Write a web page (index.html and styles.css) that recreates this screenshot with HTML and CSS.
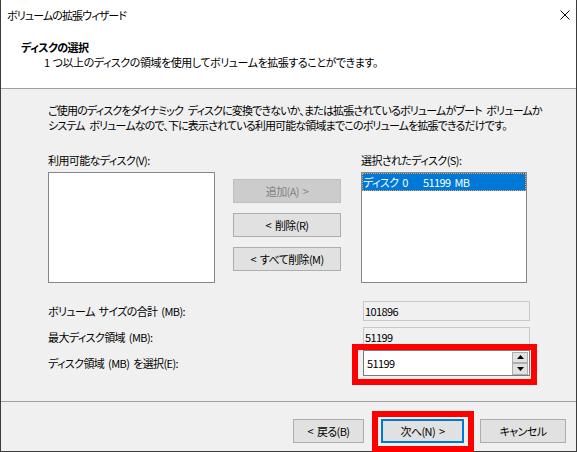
FILE: index.html
```html
<!DOCTYPE html>
<html lang="ja">
<head>
<meta charset="utf-8">
<title>ボリュームの拡張ウィザード</title>
<link rel="stylesheet" href="styles.css">
</head>
<body>
<div class="window">
  <div class="top">
    <div class="titlebar">
      <span class="title">ボリュームの拡張ウィザード</span>
      <svg class="close" width="10" height="10" viewBox="0 0 10 10"><path d="M0.5 0.5L9.5 9.5M9.5 0.5L0.5 9.5" stroke="#000" stroke-width="1" fill="none"/></svg>
    </div>
    <div class="header">
      <div class="h-title">ディスクの選択</div>
      <div class="h-sub">1 つ以上のディスクの領域を使用してボリュームを拡張することができます。</div>
    </div>
  </div>
  <div class="body">
    <p class="desc">ご使用のディスクをダイナミック ディスクに変換できないか、または拡張されているボリュームがブート ボリュームか<br>システム ボリュームなので、下に表示されている利用可能な領域までこのボリュームを拡張できるだけです。</p>
    <div class="lists">
      <div class="label">利用可能なディスク(V):</div>
      <div></div>
      <div class="label">選択されたディスク(S):</div>
      <div class="listbox"></div>
      <div class="midbtns">
        <div class="btn disabled">追加(A) &gt;</div>
        <div class="btn">&lt; 削除(R)</div>
        <div class="btn">&lt; すべて削除(M)</div>
      </div>
      <div class="listbox">
        <div class="item"><span class="c1">ディスク 0</span><span>51199 MB</span></div>
      </div>
    </div>
    <div class="fields">
      <div class="flabel">ボリューム サイズの合計 (MB):</div>
      <div class="ro">101896</div>
      <div class="flabel">最大ディスク領域 (MB):</div>
      <div class="ro">51199</div>
      <div class="flabel">ディスク領域 (MB) を選択(E):</div>
      <div class="spin">
        <span class="spin-val">51199</span>
        <div class="spin-btns">
          <div class="sb"><svg width="7" height="4" viewBox="0 0 7 4"><path d="M3.5 0L7 4H0Z" fill="#000"/></svg></div>
          <div class="sb"><svg width="7" height="4" viewBox="0 0 7 4"><path d="M0 0H7L3.5 4Z" fill="#000"/></svg></div>
        </div>
      </div>
    </div>
  </div>
  <div class="footer">
    <div class="btn fbtn back">&lt; 戻る(B)</div>
    <div class="btn fbtn next">次へ(N) &gt;</div>
    <div class="btn fbtn cancel">キャンセル</div>
  </div>
  <div class="mark mark1"></div>
  <div class="mark mark2"></div>
</div>
</body>
</html>
```
FILE: styles.css
```css
* { box-sizing: border-box; }
html, body { margin: 0; padding: 0; }
body {
  font-family: "Noto Sans CJK JP", "Noto Sans", sans-serif;
  font-size: 11px;
  font-feature-settings: "palt";
  letter-spacing: -0.6px;
  word-spacing: 2px;
  color: #000;
  background: #fff;
}
.window {
  position: relative;
  width: 577px;
  height: 452px;
  border-left: 1px solid #3c3c3c;
  border-right: 1px solid #3c3c3c;
  border-bottom: 1px solid #3c3c3c;
  background: #f0f0f0;
  display: flex;
  flex-direction: column;
}
.top {
  background: #fff;
  height: 89px;
  border-bottom: 1px solid #a0a0a0;
}
.titlebar {
  height: 30px;
  display: flex;
  align-items: center;
  justify-content: space-between;
  padding: 0 6px 0 6px;
  line-height: 15px;
}
.title { letter-spacing: -0.9px; }
.close { margin-top: -1px; }
.header { padding: 10px 0 0 0; line-height: 15px; }
.h-title { font-weight: bold; padding-left: 20px; }
.h-sub { padding-left: 43px; letter-spacing: -0.45px; word-spacing: 1px; }
.body {
  height: 312px;
  padding: 14px 0 0 47px;
}
.desc { margin: 0; line-height: 15px; white-space: nowrap; letter-spacing: -0.85px; word-spacing: 3px; }
.lists {
  margin-top: 19px;
  display: grid;
  grid-template-columns: 167px 108px 168px;
  column-gap: 18px;
  width: 482px;
}
.lists > :nth-child(3) { margin-left: 2px; }
.label { line-height: 16px; height: 20px; }
.listbox {
  height: 111px;
  background: #fff;
  border: 1px solid #828790;
}
.lists .listbox:last-child { margin-left: 2px; }
.midbtns {
  padding-top: 7px;
  display: flex;
  flex-direction: column;
  gap: 10px;
}
.btn {
  height: 24px;
  background: #e1e1e1;
  border: 1px solid #adadad;
  display: flex;
  align-items: center;
  justify-content: center;
  line-height: 15px;
  white-space: pre;
}
.btn.disabled {
  background: #cccccc;
  border-color: #bfbfbf;
  color: #838383;
}
.item {
  height: 18px;
  background: #0078d7;
  color: #fff;
  display: flex;
  align-items: center;
  padding-left: 1px;
  outline: 1px dotted #f7a23b;
  outline-offset: -1px;
}
.c1 { width: 60px; }
.fields {
  margin-top: 18px;
  display: grid;
  grid-template-columns: 315px 167px;
  row-gap: 6px;
  align-items: center;
}
.fields > :nth-child(5), .fields > :nth-child(6) { margin-top: -3px; }
.ro {
  height: 20px;
  border: 1px solid #c8c8c8;
  background: #f0f0f0;
  padding-left: 1px;
  display: flex;
  align-items: center;
}
.spin {
  height: 26px;
  border: 1px solid #7a7a7a;
  background: #fff;
  display: flex;
  align-items: center;
  justify-content: space-between;
  padding: 0 1px 0 3px;
}
.spin-btns { display: flex; flex-direction: column; }
.sb {
  width: 16px;
  height: 11px;
  background: #e1e1e1;
  border: 1px solid #adadad;
  display: flex;
  align-items: center;
  justify-content: center;
}
.sb + .sb { height: 12px; }
.footer {
  flex: 1;
  border-top: 1px solid #a0a0a0;
  display: flex;
  padding: 17px 0 0 292px;
}
.fbtn { height: 24px; }
.back { width: 71px; }
.next { width: 83px; margin-left: 17px; border: 2px solid #0078d7; }
.cancel { width: 86px; margin-left: 16px; }
.mark {
  position: absolute;
  border: 6px solid #ff0000;
}
.mark1 { left: 351px; top: 344px; width: 185px; height: 41px; }
.mark2 { left: 371px; top: 411px; width: 102px; height: 41px; }
```
